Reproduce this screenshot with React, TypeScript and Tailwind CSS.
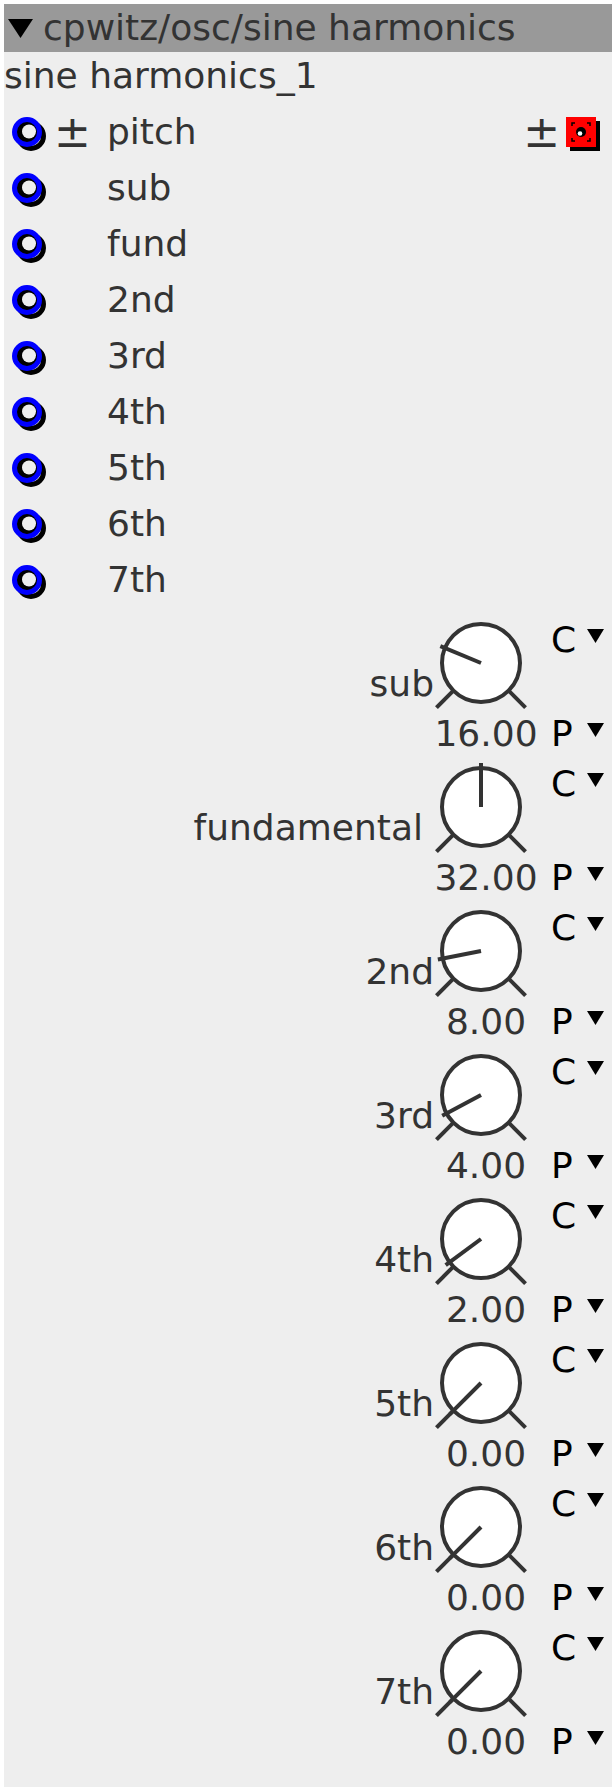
import React from 'react';

// knob range 0..64, sweep 270deg starting bottom-left
const KNOB_MAX = 64;

const inputs = ['pitch', 'sub', 'fund', '2nd', '3rd', '4th', '5th', '6th', '7th'];

const knobs = [
  { label: 'sub', value: 16 },
  { label: 'fundamental', value: 32, pad: true },
  { label: '2nd', value: 8 },
  { label: '3rd', value: 4 },
  { label: '4th', value: 2 },
  { label: '5th', value: 0 },
  { label: '6th', value: 0 },
  { label: '7th', value: 0 },
];

function Port() {
  return (
    <svg width="40" height="40" viewBox="0 0 40 40" className="shrink-0">
      <circle cx="24" cy="24" r="12.5" fill="none" stroke="#000" strokeWidth="5" />
      <circle cx="20" cy="20" r="12.5" fill="#000" stroke="#0000ff" strokeWidth="5" />
      <circle cx="22" cy="19.5" r="7" fill="#eeeeee" />
    </svg>
  );
}

function OutPort() {
  return (
    <svg width="34" height="34" viewBox="0 0 34 34" className="shrink-0">
      <rect x="4" y="4" width="30" height="30" fill="#000" />
      <rect x="0" y="0" width="30" height="30" fill="#ff0000" />
      <path d="M6 9V6H9M21 6H24V9M24 21V24H21M9 24H6V21" fill="none" stroke="#000" strokeWidth="1.5" />
      <circle cx="15" cy="15" r="5" fill="#000" />
      <circle cx="14" cy="16.5" r="2.3" fill="#fff" />
    </svg>
  );
}

function Tri({ w = 17, h = 14 }: { w?: number; h?: number }) {
  return (
    <svg width={w} height={h} viewBox={`0 0 ${w} ${h}`} className="shrink-0">
      <polygon points={`0,0 ${w},0 ${w / 2},${h}`} fill="#000" />
    </svg>
  );
}

function Knob({ value }: { value: number }) {
  const cx = 47;
  const cy = 55;
  const a = ((-135 + (270 * value) / KNOB_MAX) * Math.PI) / 180;
  const d = Math.SQRT1_2;
  return (
    <svg width="104" height="108" viewBox="0 0 104 108">
      <circle cx={cx} cy={cy} r="39" fill="#fff" stroke="#333" strokeWidth="4" />
      <line x1={cx - 39 * d} y1={cy + 39 * d} x2={cx - 63 * d} y2={cy + 63 * d} stroke="#333" strokeWidth="4" />
      <line x1={cx + 39 * d} y1={cy + 39 * d} x2={cx + 63 * d} y2={cy + 63 * d} stroke="#333" strokeWidth="4" />
      <line x1={cx} y1={cy} x2={cx + 44 * Math.sin(a)} y2={cy - 44 * Math.cos(a)} stroke="#333" strokeWidth="4" />
    </svg>
  );
}

function Dropdown({ letter }: { letter: string }) {
  return (
    <div className="flex items-start h-[36px]">
      <span className="w-[36px] text-[36px] leading-[36px] text-black">{letter}</span>
      <div className="mt-[7px]">
        <Tri />
      </div>
    </div>
  );
}

export default function App() {
  return (
    <div className="min-h-[1792px] bg-white p-[4px]">
      <div className="w-[608px] h-[1783px] bg-[#eeeeee] text-[#333333] font-['DejaVu_Sans',sans-serif]">
        {/* title bar */}
        <div className="flex items-center h-[48px] bg-[#999999] pl-[4px]">
          <Tri w={25} h={19} />
          <span className="ml-[10px] text-[36px] leading-[48px] whitespace-nowrap">cpwitz/osc/sine harmonics</span>
        </div>

        <div className="h-[48px] mb-[4px] text-[36px] leading-[48px] whitespace-nowrap">sine harmonics_1</div>

        {/* inputs */}
        {inputs.map((name, i) => (
          <div key={name} className="flex items-center h-[56px] pl-[3px] pr-[12px]">
            <Port />
            <div className="w-[60px] shrink-0 pl-[7px] text-[44px] leading-[48px]">{i === 0 ? '±' : ''}</div>
            <span className="text-[36px] leading-[48px]">{name}</span>
            {i === 0 && (
              <div className="ml-auto flex items-center">
                <span className="text-[44px] leading-[48px]">±</span>
                <div className="ml-[6px] mt-[4px]">
                  <OutPort />
                </div>
              </div>
            )}
          </div>
        ))}

        {/* knobs */}
        {knobs.map((k) => (
          <div key={k.label} className="flex items-start justify-end h-[144px] pr-[8px]">
            <span className={'mt-[52px] text-[36px] leading-[48px] whitespace-nowrap' + (k.pad ? ' mr-[11px]' : '')}>
              {k.label}
            </span>
            <div className="w-[104px] shrink-0 flex flex-col">
              <Knob value={k.value} />
              <div className="h-[36px] text-center text-[36px] leading-[36px]">{k.value.toFixed(2)}</div>
            </div>
            <div className="ml-[13px] w-[53px] h-[144px] shrink-0 flex flex-col justify-between pt-[14px]">
              <Dropdown letter="C" />
              <Dropdown letter="P" />
            </div>
          </div>
        ))}
      </div>
    </div>
  );
}
